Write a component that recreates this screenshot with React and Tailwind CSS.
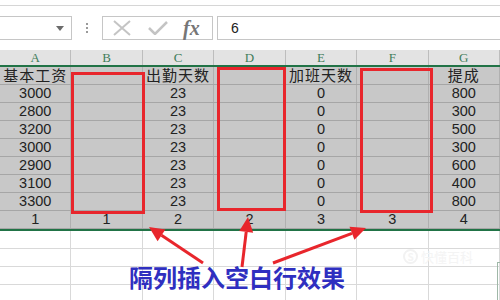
const columns = ["A", "B", "C", "D", "E", "F", "G"];

const rows = [
  ["基本工资", "", "出勤天数", "", "加班天数", "", "提成"],
  ["3000", "", "23", "", "0", "", "800"],
  ["2800", "", "23", "", "0", "", "300"],
  ["3200", "", "23", "", "0", "", "500"],
  ["3000", "", "23", "", "0", "", "300"],
  ["2900", "", "23", "", "0", "", "600"],
  ["3100", "", "23", "", "0", "", "400"],
  ["3300", "", "23", "", "0", "", "800"],
  ["1", "1", "2", "2", "3", "3", "4"],
];

const sans = "font-['Liberation_Sans','Noto_Sans_CJK_SC',sans-serif]";

function FormulaBar() {
  return (
    <div className="h-[50px] bg-white">
      <div className="h-[6px] border-b border-[#d6d6d6]" />
      <div className="flex items-center mt-[10px] h-[24px]">
        <div className="w-[72px] h-full border border-l-0 border-[#c6c6c6] flex items-center justify-end pr-[7px]">
          <svg width="8" height="5" viewBox="0 0 8 5">
            <path d="M0 0 L8 0 L4 5 Z" fill="#6b6b6b" />
          </svg>
        </div>
        <div className="w-[30px] flex flex-col items-center gap-[2px]">
          <span className="w-[2px] h-[2px] bg-[#9a9a9a]" />
          <span className="w-[2px] h-[2px] bg-[#9a9a9a]" />
          <span className="w-[2px] h-[2px] bg-[#9a9a9a]" />
        </div>
        <div className="w-[111px] h-full border border-[#c6c6c6] flex items-center pl-[9px]">
          <svg width="20" height="16" viewBox="0 0 20 16">
            <path d="M2 1 L18 15 M18 1 L2 15" stroke="#c4c4c4" strokeWidth="2" />
          </svg>
          <svg width="20" height="14" viewBox="0 0 20 14" className="ml-[16px]">
            <path d="M1 7 L7 13 L19 1" stroke="#c4c4c4" strokeWidth="2.5" fill="none" />
          </svg>
          <span className="ml-[15px] font-['Liberation_Serif',serif] italic font-bold text-[20px] leading-none text-[#767676]">
            fx
          </span>
        </div>
        <div className={`ml-[4px] flex-1 h-full border border-r-0 border-[#c6c6c6] flex items-center pl-[13px] text-[14px] text-[#222] ${sans}`}>
          6
        </div>
      </div>
    </div>
  );
}

function Sheet() {
  return (
    <div className={`${sans} text-[#222]`}>
      <div className="grid grid-cols-7 h-[17px] bg-[#e3e3e3] border-b-2 border-[#217346]">
        {columns.map((c) => (
          <div
            key={c}
            className="border-r border-[#bdbdbd] flex items-end justify-center font-['Liberation_Serif',serif] text-[13px] leading-[14px] text-[#3f7d5a]"
          >
            {c}
          </div>
        ))}
      </div>
      {rows.map((row, i) => (
        <div key={i} className="grid grid-cols-7 h-[18px] bg-[#c8c8c8] border-b border-[#a6a6a6]">
          {row.map((v, j) => (
            <div
              key={j}
              className={`border-r border-[#b0b0b0] flex items-center justify-center leading-none ${
                i === 0 ? "text-[15px] tracking-[1px]" : "text-[14.5px]"
              }`}
            >
              {v}
            </div>
          ))}
        </div>
      ))}
      <div className="h-[2px] bg-[#217346]" />
      {[0, 1, 2, 3].map((r) => (
        <div key={r} className="grid grid-cols-7 h-[18px] bg-white border-b border-[#d9d9d9]">
          {columns.map((c) => (
            <div key={c} className="border-r border-[#d9d9d9]" />
          ))}
        </div>
      ))}
    </div>
  );
}

function Arrow({ x1, y1, x2, y2 }) {
  const a = Math.atan2(y2 - y1, x2 - x1);
  const len = 15;
  const w = 7;
  const bx = x2 - len * Math.cos(a);
  const by = y2 - len * Math.sin(a);
  const px = -Math.sin(a) * w;
  const py = Math.cos(a) * w;
  return (
    <g>
      <line x1={x1} y1={y1} x2={bx} y2={by} stroke="#e8262c" strokeWidth="3" />
      <polygon
        points={`${x2},${y2} ${bx + px},${by + py} ${bx - px},${by - py}`}
        fill="#e8262c"
      />
    </g>
  );
}

export default function App() {
  return (
    <div className="relative w-[500px] h-[300px] overflow-hidden bg-white">
      <FormulaBar />
      <Sheet />

      <div className="absolute left-[71px] top-[72px] w-[74px] h-[142px] border-[3px] border-[#e8262c]" />
      <div className="absolute left-[217px] top-[67px] w-[69px] h-[144px] border-[3px] border-[#e8262c]" />
      <div className="absolute left-[360px] top-[68px] w-[73px] h-[145px] border-[3px] border-[#e8262c]" />

      <svg className="absolute left-0 top-0" width="500" height="300">
        <Arrow x1={203} y1={263} x2={149} y2={227} />
        <Arrow x1={242} y1={267} x2={248} y2={217} />
        <Arrow x1={273} y1={263} x2={366} y2={228} />
      </svg>

      <div className="absolute left-[403px] top-[247px] flex items-center gap-[3px] text-[#f4f4f4] font-['Noto_Sans_CJK_SC',sans-serif] text-[13px]">
        <span className="w-[15px] h-[15px] rounded-full border-2 border-[#f2f2f2] flex items-center justify-center text-[10px] font-bold">
          S
        </span>
        快懂百科
      </div>
      <div className="absolute left-[497px] top-[262px] w-[10px] h-[40px] border-l border-t border-[#9fb8a8]" />

      <div className="absolute left-[129px] top-[262px] font-['Noto_Sans_CJK_SC',sans-serif] font-bold text-[24px] leading-[30px] text-[#2f2fc0]">
        隔列插入空白行效果
      </div>
    </div>
  );
}
